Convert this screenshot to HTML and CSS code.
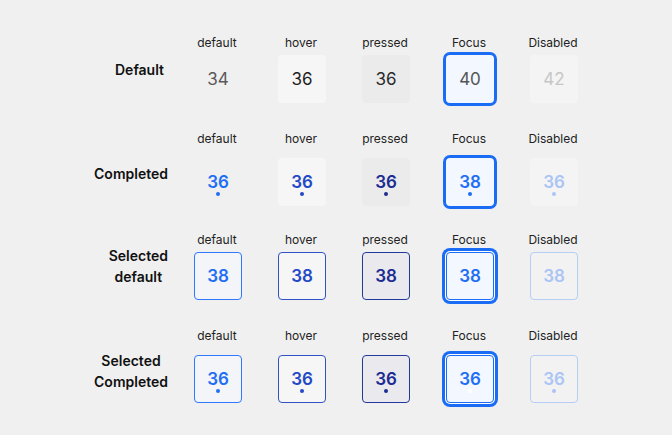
FILE: index.html
```html
<!DOCTYPE html>
<html lang="en">
<head>
<meta charset="utf-8">
<title>Calendar day states</title>
<link rel="stylesheet" href="styles.css">
</head>
<body>
<main class="board">
  <section class="row">
    <div class="row-label row-label--short"><span>Default</span></div>
    <div class="cells">
      <div class="cell"><span class="cell-label">default</span><div class="day plain plain--default">34</div></div>
      <div class="cell"><span class="cell-label">hover</span><div class="day plain plain--hover">36</div></div>
      <div class="cell"><span class="cell-label">pressed</span><div class="day plain plain--pressed">36</div></div>
      <div class="cell"><span class="cell-label">Focus</span><div class="day plain plain--focus">40</div></div>
      <div class="cell"><span class="cell-label">Disabled</span><div class="day plain plain--disabled">42</div></div>
    </div>
  </section>

  <section class="row row--completed">
    <div class="row-label"><span>Completed</span></div>
    <div class="cells">
      <div class="cell"><span class="cell-label">default</span><div class="day done done--default dot">36</div></div>
      <div class="cell"><span class="cell-label">hover</span><div class="day done done--hover dot">36</div></div>
      <div class="cell"><span class="cell-label">pressed</span><div class="day done done--pressed dot">36</div></div>
      <div class="cell"><span class="cell-label">Focus</span><div class="day done done--focus dot">38</div></div>
      <div class="cell"><span class="cell-label">Disabled</span><div class="day done done--disabled dot">36</div></div>
    </div>
  </section>

  <section class="row row--tight">
    <div class="row-label"><span>Selected<br>default</span></div>
    <div class="cells">
      <div class="cell"><span class="cell-label">default</span><div class="day sel sel--default">38</div></div>
      <div class="cell"><span class="cell-label">hover</span><div class="day sel sel--hover">38</div></div>
      <div class="cell"><span class="cell-label">pressed</span><div class="day sel sel--pressed">38</div></div>
      <div class="cell"><span class="cell-label">Focus</span><div class="day sel sel--focus">38</div></div>
      <div class="cell"><span class="cell-label">Disabled</span><div class="day sel sel--disabled">38</div></div>
    </div>
  </section>

  <section class="row row--completed">
    <div class="row-label"><span>Selected<br>Completed</span></div>
    <div class="cells">
      <div class="cell"><span class="cell-label">default</span><div class="day sel sel--default dot">36</div></div>
      <div class="cell"><span class="cell-label">hover</span><div class="day sel sel--hover dot">36</div></div>
      <div class="cell"><span class="cell-label">pressed</span><div class="day sel sel--pressed dot">36</div></div>
      <div class="cell"><span class="cell-label">Focus</span><div class="day sel sel--focus dot dot--white">36</div></div>
      <div class="cell"><span class="cell-label">Disabled</span><div class="day sel sel--disabled dot">36</div></div>
    </div>
  </section>
</main>
</body>
</html>
```

FILE: styles.css
```css
html, body {
  margin: 0;
  padding: 0;
  background: #f0f0f0;
  font-family: Inter, "Noto Sans", "Liberation Sans", sans-serif;
  color: #1f1f1f;
}

.board {
  padding-top: 35px;
  padding-bottom: 30px;
  display: flex;
  flex-direction: column;
  gap: 28px;
}

.row {
  display: flex;
  align-items: center;
}

.row--tight {
  margin-top: -2px;
}

.row-label {
  width: 168px;
  margin-right: 26px;
  display: flex;
  justify-content: flex-end;
  font-size: 14px;
  font-weight: 600;
  line-height: 21px;
  text-align: center;
  color: #111;
}

.row-label--short {
  padding-right: 4px;
  width: 164px;
}

.row--completed .row-label {
  padding-top: 10px;
}

.cells {
  display: flex;
  gap: 36px;
}

.cell {
  width: 48px;
  display: flex;
  flex-direction: column;
  align-items: center;
  gap: 5px;
}

.row--completed .cell {
  gap: 12px;
}

.cell-label {
  font-size: 12px;
  line-height: 15px;
  color: #222;
  white-space: nowrap;
  margin-left: -2px;
}

.day {
  position: relative;
  width: 48px;
  height: 48px;
  box-sizing: border-box;
  border-radius: 4px;
  display: flex;
  align-items: center;
  justify-content: center;
  font-size: 17px;
  line-height: 20px;
}

/* plain (row 1) */
.plain { font-weight: 400; }
.plain--default { color: #5a5a5a; }
.plain--hover { background: #f6f6f6; color: #1f1f1f; }
.plain--pressed { background: #ebebeb; color: #2a2a2a; }
.plain--focus {
  background: #f3f7ff;
  color: #555;
  box-shadow: 0 0 0 3px #1a6cf5;
}
.plain--disabled { background: #f4f4f4; color: #c6c6c6; }

/* completed (row 2) */
.done { font-weight: 600; }
.done--default { color: #1f6ff5; }
.done--hover { background: #f6f6f6; color: #2349c6; }
.done--pressed { background: #ebebeb; color: #1c2c92; }
.done--focus {
  background: #f3f7ff;
  color: #1f6ff5;
  box-shadow: 0 0 0 3px #1a6cf5;
}
.done--disabled { background: #f4f4f4; color: #abc5f4; }

/* selected (rows 3, 4) */
.sel { font-weight: 600; border: 1px solid; }
.sel--default { background: #f4f5f8; border-color: #2f78ff; color: #1f6ff5; }
.sel--hover { background: #f6f6f6; border-color: #2f52c6; color: #2349c6; }
.sel--pressed { background: #eaeaee; border-color: #23389c; color: #1c2c92; }
.sel--focus {
  background: #f3f7ff;
  border-color: #1a6cf5;
  color: #1f6ff5;
  box-shadow: 0 0 0 1px #ffffff, 0 0 0 4px #1a6cf5;
}
.sel--disabled { background: #f2f2f2; border-color: #b6cdf5; color: #abc5f4; }

/* completed dot */
.dot::after {
  content: "";
  position: absolute;
  left: 50%;
  top: calc(50% + 10px);
  width: 4px;
  height: 4px;
  margin-left: -2px;
  border-radius: 50%;
  background: currentColor;
}

.dot--white::after {
  background: #ffffff;
}
```
